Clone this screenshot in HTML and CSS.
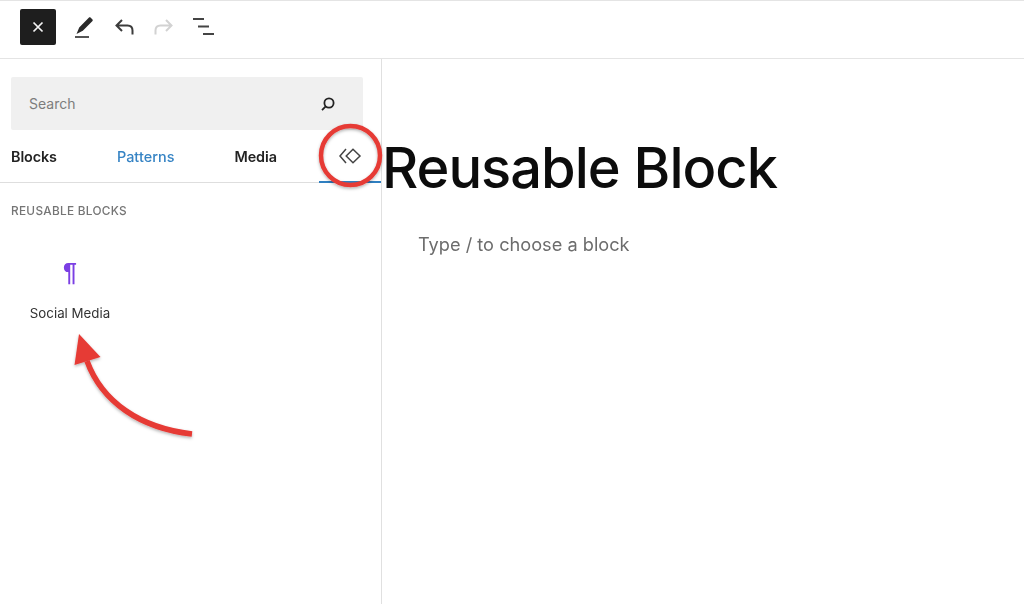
FILE: index.html
```html
<!DOCTYPE html>
<html lang="en">
<head>
<meta charset="utf-8">
<title>Reusable Block</title>
<link rel="stylesheet" href="styles.css">
</head>
<body>
<div class="app">
  <header class="toolbar">
    <button class="close" aria-label="Close">
      <svg width="12" height="12" viewBox="0 0 12 12"><path d="M1.5 1.5l9 9M10.5 1.5l-9 9" stroke="#f4f4f4" stroke-width="1.7" fill="none"/></svg>
    </button>
    <svg class="tool" width="24" height="24" viewBox="0 0 24 24"><path d="M20.5 4.6l-2-2.1c-.5-.4-1.1-.4-1.500 0L7.2 12.4 4.5 19l6.3-3.2 9.7-9.7c.4-.4.4-1.1 0-1.500z" fill="#2a2a2a"/><rect x="3" y="21" width="14" height="2" fill="#555"/></svg>
    <svg class="tool" width="24" height="24" viewBox="0 0 24 24"><path d="M20.5 19.5v-4c0-3-2-5-5-5H5M10 5l-5.5 5.5L10 16" stroke="#3c3c3c" stroke-width="2" fill="none"/></svg>
    <svg class="tool" width="24" height="24" viewBox="0 0 24 24"><path d="M3.5 19.5v-4c0-3 2-5 5-5H19M14 5l5.5 5.5L14 16" stroke="#d2d2d2" stroke-width="2" fill="none"/></svg>
    <svg class="tool" width="24" height="24" viewBox="0 0 24 24"><path d="M1 4h11M6 11.500h11M11 19h11" stroke="#444" stroke-width="2" fill="none"/></svg>
  </header>
  <div class="body">
    <aside class="sidebar">
      <div class="search">
        <span class="search-text">Search</span>
        <svg width="18" height="18" viewBox="0 0 18 18"><circle cx="10" cy="8" r="4.600" stroke="#222" stroke-width="1.800" fill="none"/><path d="M6.700 11.400L3 15.200" stroke="#222" stroke-width="1.800"/></svg>
      </div>
      <nav class="tabs">
        <span class="tab">Blocks</span>
        <span class="tab tab-patterns">Patterns</span>
        <span class="tab tab-media">Media</span>
        <span class="tab tab-icon">
          <svg width="24" height="16" viewBox="0 0 24 16"><path d="M7 1L1 8l6 7" stroke="#444" stroke-width="1.500" fill="none"/><path d="M14 1.200L21 8l-7 6.800L7.200 8z" stroke="#444" stroke-width="1.500" fill="none"/></svg>
        </span>
      </nav>
      <section class="panel">
        <h2 class="panel-title">REUSABLE BLOCKS</h2>
        <div class="block-item">
          <span class="block-icon">¶</span>
          <span class="block-label">Social Media</span>
        </div>
      </section>
    </aside>
    <main class="editor">
      <h1 class="title">Reusable Block</h1>
      <p class="hint">Type / to choose a block</p>
    </main>
  </div>
  <svg class="marks" width="1024" height="604" viewBox="0 0 1024 604">
    <defs><filter id="s" x="-20%" y="-20%" width="140%" height="140%"><feDropShadow dx="0" dy="1.500" stdDeviation="1.500" flood-color="#000" flood-opacity=".3"/></filter></defs>
    <g filter="url(#s)">
      <circle cx="350.500" cy="155.500" r="29.500" stroke="#e63a36" stroke-width="4.500" fill="none"/>
      <path d="M192 434C140 428 102 402 87 361" stroke="#e63a36" stroke-width="5.500" fill="none"/>
      <path d="M79 334L100.500 357 74.500 365z" fill="#e63a36"/>
    </g>
  </svg>
</div>
</body>
</html>
```
FILE: styles.css
```css
* { box-sizing: border-box; }
html, body { margin: 0; height: 100%; background: #fff; }
body { font-family: Inter, "Liberation Sans", sans-serif; color: #1e1e1e; overflow: hidden; }
.app { position: relative; width: 1024px; height: 604px; display: flex; flex-direction: column; filter: blur(.35px); }
.toolbar {
  height: 59px; flex: none; display: flex; align-items: center; gap: 16px;
  padding: 0 0 6px 20px; border-top: 1px solid #e4e4e4; border-bottom: 1px solid #e4e4e4;
}
.close {
  width: 36px; height: 36px; padding: 0; border: 0; border-radius: 2px;
  background: #1e1e1e; display: flex; align-items: center; justify-content: center;
}
.tool { flex: none; }
.body { flex: 1; display: flex; min-height: 0; }
.sidebar { width: 382px; flex: none; border-right: 1px solid #e0e0e0; padding-top: 18px; }
.search {
  margin: 0 18px 0 11px; height: 53px; background: #f0f0f0; border-radius: 2px;
  display: flex; align-items: center; justify-content: space-between; padding: 0 26px 0 18px;
}
.search-text { font-size: 14px; color: #7d7d7d; margin-top: -1px; }
.tabs {
  height: 53px; display: flex; align-items: center; position: relative;
  border-bottom: 1px solid #dedede; padding: 1px 0 0 11px;
}
.tab { font-size: 14.400px; font-weight: 600; letter-spacing: -.1px; color: #222; }
.tab-patterns { margin-left: 60px; color: #3583c4; font-weight: 500; letter-spacing: .05px; }
.tab-media { margin-left: 60px; }
.tab-icon { margin-left: 62px; height: 100%; display: flex; align-items: center; margin-top: -1px; }
.tabs::after {
  content: ""; position: absolute; left: 319px; right: 0; bottom: -1px; height: 2px; background: #2f7fc1;
}
.panel { padding: 21px 0 0 11px; }
.panel-title { margin: 0; font-size: 11.800px; line-height: 14px; font-weight: 500; letter-spacing: .3px; color: #757575; }
.block-item { width: 118px; margin-top: 40px; display: flex; flex-direction: column; align-items: center; }
.block-icon { font-size: 25px; line-height: 28px; font-weight: 700; color: #7b3fe4; font-family: "Liberation Sans", sans-serif; width: 100%; text-align: center; }
.block-label { margin-top: 19px; font-size: 13.300px; line-height: 16px; color: #333; width: 100%; text-align: center; }
.editor { flex: 1; padding: 0; min-width: 0; }
.title { margin: 76px 0 0; font-size: 56px; line-height: 66px; font-weight: 500; letter-spacing: -1px; color: #0c0c0c; }
.hint { margin: 31px 0 0 36px; font-size: 18.200px; line-height: 24px; color: #6c6c6c; }
.marks { position: absolute; left: 0; top: 0; pointer-events: none; }
```
